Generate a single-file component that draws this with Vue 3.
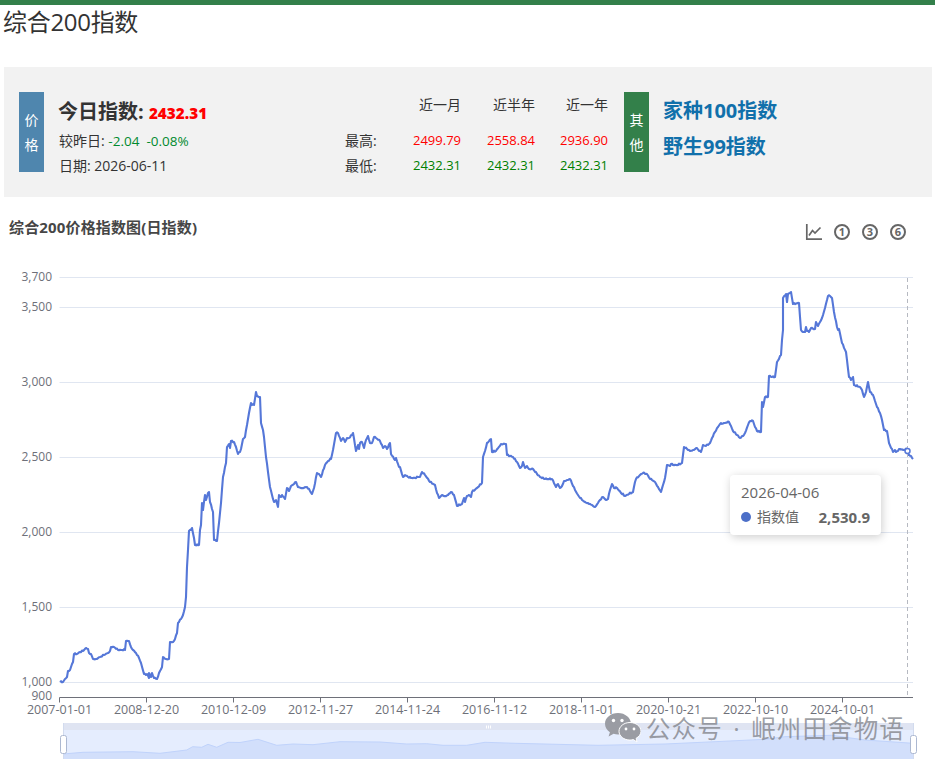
<script setup>
const priceRows = [
  { name: '最高:', cls: 'up', values: ['2499.79', '2558.84', '2936.90'] },
  { name: '最低:', cls: 'down', values: ['2432.31', '2432.31', '2432.31'] }
]
const periods = ['近一月', '近半年', '近一年']

const yTicks = [
  { label: '3,700', y: 277 },
  { label: '3,500', y: 307 },
  { label: '3,000', y: 382 },
  { label: '2,500', y: 457 },
  { label: '2,000', y: 532 },
  { label: '1,500', y: 607 },
  { label: '1,000', y: 682 }
]
const xLabels = ['2007-01-01', '2008-12-20', '2010-12-09', '2012-11-27', '2014-11-24', '2016-11-12', '2018-11-01', '2020-10-21', '2022-10-10', '2024-10-01']
const xTicks = xLabels.map((label, i) => ({ label, x: 59.5 + i * 87 }))

// traced from the reference, page coordinates
const traced = `60,682 63,682 65,679 67,677 68,671 70,670 72,664 73,662 74,654 77,654 80,652 83,651 86,648 88,649 89,653 91,654 93,659 96,659 100,657 104,655 108,653 110,651
111,647 114,647 118,650 122,650 125,650 126,641 129,641 131,647 133,650 136,653 139,658 141,663 144,674 146,675 147,674 149,678 149,673 151,677 152,673 154,678 157,679 160,671 162,667 163,657
166,659 169,659 170,642 173,642 175,639 177,633 178,623 181,619 183,615 185,607 186,597 187,567 188,550 189,531 191,530 192,528 194,538 195,545 199,545 200,530 201,525 202,503 203,510 205,495 206,500 208,493 209,492 210,502 213,512 214,540 217,541 219,523 221,503
223,477 226,463 227,447 229,444 230,448 231,441 234,442 236,447 238,454 240,452 241,449 243,439 245,437 247,425 249,413 251,403 252,405 254,405 256,392 257,396 260,397 261,423 263,430 264,437 266,457 268,472 270,487 272,495 274,502 276,500 278,507 279,495 281,497 282,495 285,499 287,488 289,491 291,486 294,484 296,482 298,487 302,488 307,487 310,491 312,494 314,488 317,473 319,474 321,477 325,465 328,461 331,459 333,450 336,433 338,433 341,441 343,438 345,442 347,438 349,438
352,435 353,433 356,451 358,445 359,449 360,443 362,442 364,448 366,440 368,436 370,443 372,443 374,437 376,438 380,441 383,448 385,446 387,449 390,443 391,454 395,460 396,458 399,467 400,467 403,477 405,475 408,477 411,478 415,478 418,477 420,477 422,472 425,475 430,482 435,485 437,493 439,498 442,495 445,496 448,495 451,492 454,495 457,506 462,504 464,498 465,502 467,496 469,495 471,497 472,492 477,488 482,483
483,457 485,451 487,443 491,439 492,452 496,451 501,444 506,444 507,455 510,456 513,457 517,462 520,468 522,466 523,462 525,468 527,466 529,469 533,469 537,474 540,477 545,479 552,479 556,487 558,484 560,488 562,486 564,481 567,480 570,479 575,490 578,495 582,500 585,502 588,503 592,505 595,507 598,503 600,500 603,497 606,500 608,499 610,490 612,484 614,488 617,488 621,493 625,496 629,494 633,492 635,482 636,479 640,475 643,473 647,474 650,479 652,480 655,482 658,487 661,492 663,485 665,478 667,465 670,466 671,464 673,465 678,465 682,463 684,447 687,449 690,451 693,450 697,448 699,451 701,452 703,445 706,446 710,443 712,438 715,432 718,427 720,424 724,423 729,422 731,426 733,431 737,435 740,438 743,436 745,433 748,425 750,421 753,421 755,427 757,431 761,432
762,402 763,407 765,397 768,397 769,376 772,377 775,377 777,362 781,355 782,340 783,330 783,298 786,294 787,302 788,294 791,292 793,304 799,303 801,330 803,332 805,332 806,327 807,331 809,332 811,328 815,329 816,322 818,326 820,322 822,318 825,308 828,296 830,296 832,298 834,312 837,327 838,330 839,329 842,343 846,352 849,377 851,380 853,377 854,385 860,387 862,390 864,397 866,392 868,382 870,392 873,395 877,407 880,413 882,420 884,430 887,431 889,443 893,452 895,450 896,452 900,449 903,450 907,449 908,455 911,456 913,459`

// daily data is noisy, so add a small wobble between the traced points
const tracedPts = traced.trim().split(/\s+/).map(p => p.split(',').map(Number))
const linePts = []
tracedPts.forEach((p, i) => {
  linePts.push(p.join(','))
  const next = tracedPts[i + 1]
  if (!next || next[0] - p[0] < 2) return
  const steps = Math.floor(next[0] - p[0])
  for (let s = 1; s < steps; s++) {
    const x = p[0] + s
    const y = p[1] + (next[1] - p[1]) * s / steps + Math.sin(x * 2.7) * Math.sin(x * 0.9) * 0.8
    linePts.push(`${x},${y.toFixed(1)}`)
  }
})
const line = linePts.join(' ')

const miniPts = [[63,754],[83,752.3],[133,751.7],[160,753.3],[186.7,750],[192.7,746.7],[201.7,747.3],[208,744.3],[216.7,747.3],[228,742.3],[240,742.5],[258,739.3],[276.7,745.3],[293,744],[313,744.7],[340,741.7],[380,742],[406.7,744],[426.7,743.7],[443,745.3],[466.7,745.3],[485,742.3],[515,743.3],[598,745.3],[665,744],[715,741.7],[765,739.3],[785,736.7],[831.7,735.3],[865,740],[913,743.3]]
const miniLine = miniPts.map(p => p.join(',')).join(' ')
const miniArea = `63,759 ${miniLine} 913,759`
</script>

<template>
  <div class="page">
    <div class="top-bar"></div>
    <h1 class="title">综合200指数</h1>

    <section class="panel">
      <div class="tag tag-blue"><span>价</span><span>格</span></div>
      <div class="today">
        <div class="today-main">今日指数: <b class="today-num">2432.31</b></div>
        <div class="today-row">较昨日: <span class="change">-2.04</span><span class="change gap">-0.08%</span></div>
        <div class="today-row">日期: 2026-06-11</div>
      </div>
      <div class="price-table">
        <span></span>
        <span v-for="p in periods" :key="p" class="head-cell">{{ p }}</span>
        <template v-for="row in priceRows" :key="row.name">
          <span class="row-name">{{ row.name }}</span>
          <span v-for="(v, i) in row.values" :key="i" :class="row.cls">{{ v }}</span>
        </template>
      </div>
      <div class="tag tag-green"><span>其</span><span>他</span></div>
      <div class="links">
        <a>家种100指数</a>
        <a>野生99指数</a>
      </div>
    </section>

    <div class="chart-head">
      <span class="chart-title">综合200价格指数图(日指数)</span>
      <div class="tools">
        <svg class="tool" viewBox="0 0 16 16">
          <path d="M0.8 0V15.200H16" />
          <path d="M3 11.500L6.500 6.500L9 9L14.500 3.500" />
        </svg>
        <svg v-for="n in [1, 3, 6]" :key="n" class="tool circle" viewBox="0 0 16 16">
          <circle cx="8" cy="8" r="7" />
          <text x="8" y="11.700" text-anchor="middle">{{ n }}</text>
        </svg>
      </div>
    </div>

    <div class="chart">
      <svg class="plot" width="935" height="515" viewBox="0 250 935 515">
        <line v-for="t in yTicks" :key="t.y" x1="59.5" x2="913" :y1="t.y + 0.5" :y2="t.y + 0.5" class="grid" />
        <text v-for="t in yTicks" :key="t.label" x="52" :y="t.y + 4" text-anchor="end" class="axis-text">{{ t.label }}</text>
        <text x="52" y="700" text-anchor="end" class="axis-text">900</text>

        <line x1="59.5" x2="913" y1="697.5" y2="697.5" class="axis" />
        <g v-for="t in xTicks" :key="t.label">
          <line :x1="t.x" :x2="t.x" y1="697.5" y2="702.5" class="axis" />
          <text :x="t.x" y="713.500" text-anchor="middle" class="axis-text x-text">{{ t.label }}</text>
        </g>

        <polyline :points="line" class="series" />
        <line x1="907.5" x2="907.5" y1="278" y2="697" class="pointer" />
        <circle cx="907.5" cy="451" r="2.5" class="dot" />

        <!-- data zoom strip -->
        <rect x="63" y="723" width="851" height="36" class="dz-bg" />
        <rect x="63" y="723" width="851" height="7" class="dz-top" />
        <polygon :points="miniArea" class="dz-area" />
        <polyline :points="miniLine" class="dz-line" />
        <line x1="63.5" x2="63.5" y1="723" y2="759" class="dz-edge" />
        <line x1="913.5" x2="913.5" y1="723" y2="759" class="dz-edge" />
        <rect x="60.5" y="735.5" width="6" height="18" rx="2" class="dz-handle" />
        <rect x="910.5" y="735.5" width="6" height="18" rx="2" class="dz-handle" />
        <path d="M486.5 725.5v3M488.5 725.5v3M490.5 725.5v3" class="dz-grip" />
      </svg>

      <div class="tooltip">
        <div class="tip-date">2026-04-06</div>
        <div class="tip-row">
          <i class="tip-dot"></i>
          <span class="tip-name">指数值</span>
          <b class="tip-val">2,530.9</b>
        </div>
      </div>

      <div class="watermark">
        <svg class="wx" viewBox="0 0 36 30">
          <path d="M13 0C5.800 0 0 4.800 0 10.800c0 3.400 1.900 6.400 4.900 8.400L3.600 23.500l5-2.700c1.400.4 2.900.6 4.400.6 7.200 0 13-4.800 13-10.600S20.200 0 13 0z" />
          <path class="wx-front" d="M25 9.500c-6 0-11 3.900-11 8.800s5 8.800 11 8.800c1.200 0 2.300-.2 3.400-.5l3.600 2.400-.9-3.700c2.900-1.600 4.900-4.100 4.900-7 0-4.900-5-8.800-11-8.800z" />
          <circle cx="8.500" cy="7.500" r="1.700" fill="#fff" />
          <circle cx="17" cy="7.500" r="1.700" fill="#fff" />
          <circle cx="21" cy="16" r="1.400" fill="#fff" />
          <circle cx="29" cy="16" r="1.400" fill="#fff" />
        </svg>
        <span class="wm-text">公众号 · 岷州田舍物语</span>
      </div>
    </div>
  </div>
</template>

<style>
html, body {
  margin: 0;
  background: #fff;
  overflow: hidden;
}
</style>

<style scoped>
.page {
  width: 935px;
  height: 765px;
  overflow: hidden;
  font-family: "Open Sans", "Noto Sans CJK SC", sans-serif;
  color: #333;
}

.top-bar {
  height: 5px;
  background: #33804a;
}

.title {
  margin: 0;
  padding-left: 3px;
  height: 62px;
  font-size: 24px;
  line-height: 33px;
  letter-spacing: -0.3px;
  font-weight: 400;
  color: #333;
}

.panel {
  display: flex;
  align-items: flex-start;
  margin: 0 3px 0 4px;
  height: 130px;
  box-sizing: border-box;
  padding: 25px 15px;
  background: #f2f2f2;
}

.tag {
  flex: none;
  width: 25px;
  height: 80px;
  display: flex;
  flex-direction: column;
  align-items: center;
  justify-content: center;
  gap: 3px;
  color: #fff;
  font-size: 14px;
  line-height: 22px;
}

.tag-blue {
  background: #4f86ae;
}

.tag-green {
  background: #33804a;
  margin-left: 16px;
}

.today {
  flex: none;
  width: 286px;
  margin-left: 15px;
}

.today-main {
  height: 36px;
  font-size: 20px;
  line-height: 40px;
  font-weight: 700;
  margin-left: -1px;
}

.today-num {
  font-size: 15.3px;
  color: #f00;
}

.today-row {
  height: 25px;
  font-size: 14px;
  line-height: 25px;
}

.change {
  color: #008a2e;
  font-size: 13.5px;
}

.change.gap {
  margin-left: 7px;
}

.price-table {
  flex: none;
  display: grid;
  grid-template-columns: 40px 76px 74px 73px;
  grid-template-rows: 36px 25px 25px;
  text-align: right;
  font-size: 13px;
  line-height: 25px;
}

.head-cell {
  font-size: 14px;
  line-height: 26px;
}

.row-name {
  font-size: 14px;
  text-align: left;
  white-space: nowrap;
}

.up {
  color: #f00;
}

.down {
  color: #008000;
}

.links {
  margin: 1px 0 0 14px;
  display: flex;
  flex-direction: column;
  font-size: 20px;
  font-weight: 700;
  line-height: 36px;
  color: #1170ab;
}

.chart-head {
  display: flex;
  align-items: flex-start;
  justify-content: space-between;
  height: 53px;
  padding: 20px 29px 0 9px;
  box-sizing: border-box;
}

.chart-title {
  font-size: 15px;
  line-height: 20px;
  font-weight: 700;
  letter-spacing: 0.15px;
  color: #464646;
}

.tools {
  display: flex;
  gap: 12px;
  margin-top: 7px;
}

.tool {
  width: 16px;
  height: 16px;
  fill: none;
  stroke: #666;
  stroke-width: 1.7;
  overflow: visible;
}

.circle circle {
  stroke-width: 2;
}

.circle text {
  fill: #666;
  stroke: none;
  font-size: 11px;
  font-weight: 700;
  font-family: "Open Sans", sans-serif;
}

.chart {
  position: relative;
  height: 515px;
}

.plot {
  display: block;
}

.grid {
  stroke: #e0e6f1;
  stroke-width: 1;
}

.axis {
  stroke: #6e7079;
  stroke-width: 1;
}

.axis-text {
  fill: #6e7079;
  font-size: 12px;
  font-family: "Open Sans", "Noto Sans CJK SC", sans-serif;
}

.x-text {
  font-size: 12.5px;
}

.series {
  fill: none;
  stroke: #5577d8;
  stroke-width: 2.1;
  stroke-linejoin: round;
}

.pointer {
  stroke: #b6b9c1;
  stroke-width: 1;
  stroke-dasharray: 4 3;
}

.dot {
  fill: #fff;
  stroke: #5577d8;
  stroke-width: 1.5;
}

.dz-bg {
  fill: #e5edfe;
}

.dz-top {
  fill: #dfe4f2;
}

.dz-area {
  fill: #d2dffb;
}

.dz-line {
  fill: none;
  stroke: #c0d3fb;
  stroke-width: 1;
}

.dz-edge {
  stroke: #d2dbee;
  stroke-width: 1;
}

.dz-handle {
  fill: #fff;
  stroke: #acb8d1;
  stroke-width: 1;
}

.dz-grip {
  fill: none;
  stroke: #fff;
  stroke-width: 1;
}

.tooltip {
  position: absolute;
  left: 730px;
  top: 225px;
  width: 151px;
  height: 60px;
  box-sizing: border-box;
  padding: 7px 11px;
  background: #fff;
  border-radius: 4px;
  box-shadow: 1px 2px 10px rgba(0, 0, 0, 0.2);
  color: #666;
}

.tip-date {
  font-size: 15px;
  line-height: 20px;
}

.tip-row {
  display: flex;
  align-items: center;
  margin-top: 5px;
  line-height: 20px;
}

.tip-dot {
  width: 10px;
  height: 10px;
  border-radius: 50%;
  background: #4c6fc8;
  margin-right: 6px;
}

.tip-name {
  font-size: 14px;
}

.tip-val {
  margin-left: auto;
  font-size: 15px;
  font-weight: 700;
}

.watermark {
  position: absolute;
  left: 605px;
  top: 463px;
  display: flex;
  align-items: center;
  gap: 7px;
  font-size: 24.5px;
  line-height: 21px;
  letter-spacing: 1.1px;
  word-spacing: 3px;
  white-space: nowrap;
  color: rgba(125, 127, 135, 0.75);
}

.wm-text {
  margin-left: -2px;
}

.wx {
  width: 36px;
  height: 30px;
  flex: none;
  fill: #9a9ca3;
}

.wx-front {
  stroke: #fff;
  stroke-width: 1;
}
</style>
